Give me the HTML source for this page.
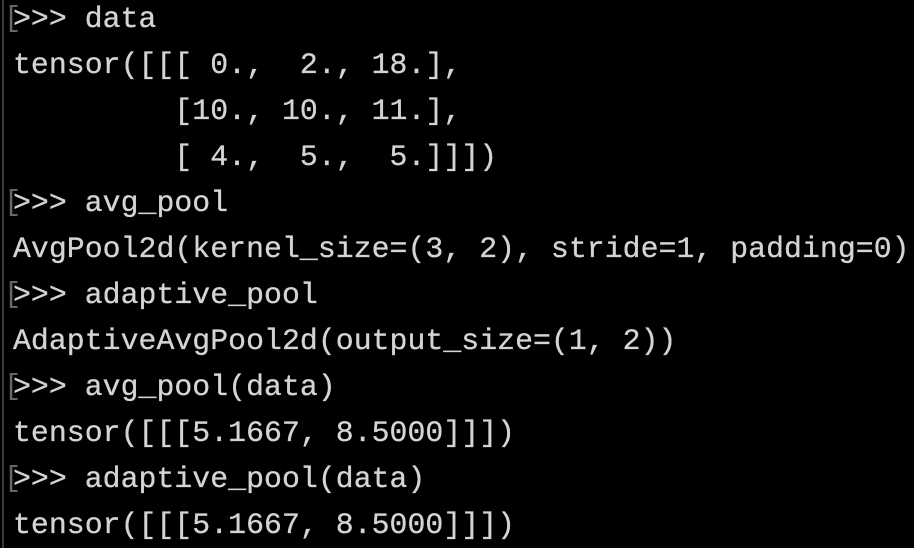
<!DOCTYPE html>
<html><head><style>
html,body{margin:0;padding:0;background:#000;width:914px;height:548px;overflow:hidden}
.bar{position:absolute;left:2px;top:0;width:2px;height:548px;background:#3a3a3a}
pre{position:absolute;left:13px;top:-4px;margin:0;font-family:"Liberation Mono",monospace;font-size:29.8px;letter-spacing:0.05px;line-height:46px;color:#d4d4d4;-webkit-text-stroke:0.3px #d4d4d4}
.m{position:absolute;left:4px;font-family:"Liberation Mono",monospace;font-size:29px;color:#666}
</style></head><body>
<div class="bar"></div>
<div class="m" style="top:2px">[</div>
<div class="m" style="top:186px">[</div>
<div class="m" style="top:278px">[</div>
<div class="m" style="top:370px">[</div>
<div class="m" style="top:462px">[</div>
<pre>&gt;&gt;&gt; data
tensor([[[ 0.,  2., 18.],
         [10., 10., 11.],
         [ 4.,  5.,  5.]]])
&gt;&gt;&gt; avg_pool
AvgPool2d(kernel_size=(3, 2), stride=1, padding=0)
&gt;&gt;&gt; adaptive_pool
AdaptiveAvgPool2d(output_size=(1, 2))
&gt;&gt;&gt; avg_pool(data)
tensor([[[5.1667, 8.5000]]])
&gt;&gt;&gt; adaptive_pool(data)
tensor([[[5.1667, 8.5000]]])</pre>
</body></html>
